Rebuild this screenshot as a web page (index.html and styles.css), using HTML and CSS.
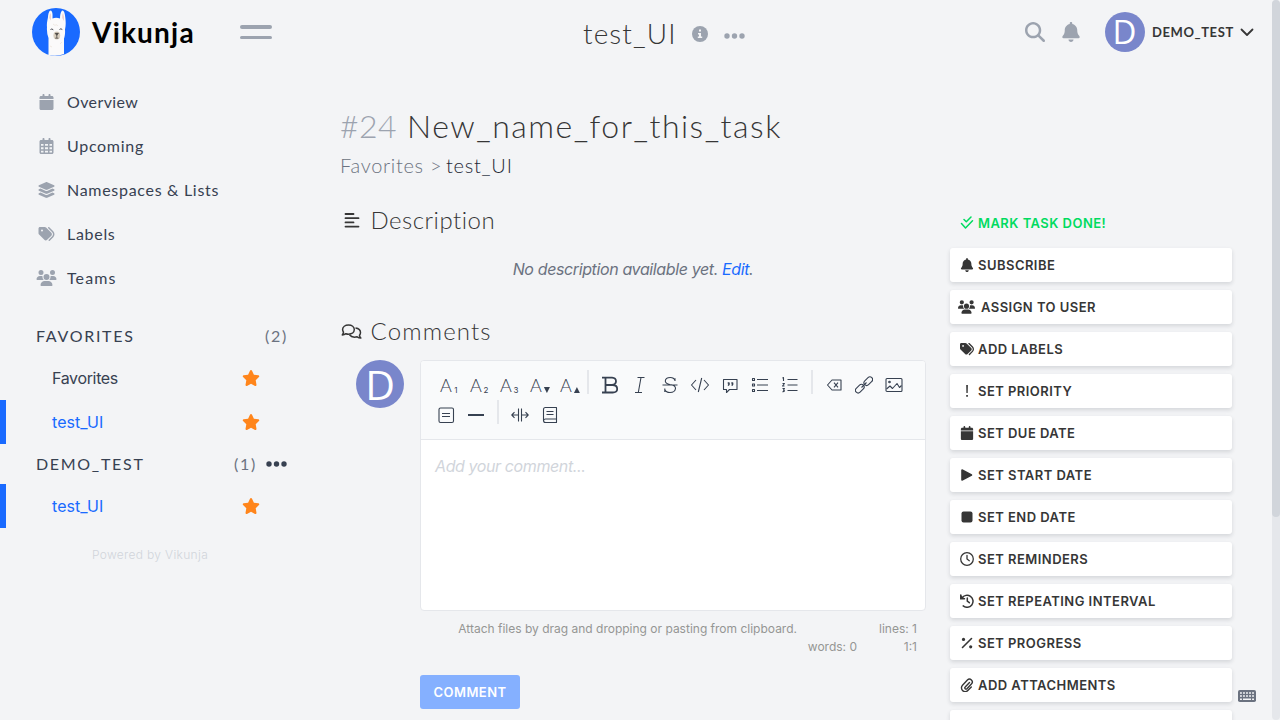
FILE: index.html
```html
<!DOCTYPE html>
<html lang="en">
<head>
<meta charset="utf-8">
<title>test_UI | Vikunja</title>
<link rel="stylesheet" href="styles.css">
</head>
<body>
<svg class="sprite" aria-hidden="true">
  <symbol id="calendar" viewBox="0 0 448 512"><path d="M96 32V64H48C21.5 64 0 85.500 0 112v48H448V112c0-26.500-21.500-48-48-48H352V32c0-17.700-14.300-32-32-32s-32 14.300-32 32V64H160V32c0-17.700-14.300-32-32-32S96 14.300 96 32zM448 192H0V464c0 26.500 21.500 48 48 48H400c26.500 0 48-21.500 48-48V192z"/></symbol>
  <symbol id="calendar-days" viewBox="0 0 448 512"><path fill-rule="evenodd" d="M96 32V64H48C21.500 64 0 85.500 0 112V464c0 26.500 21.500 48 48 48H400c26.500 0 48-21.500 48-48V112c0-26.500-21.500-48-48-48H352V32c0-17.700-14.300-32-32-32s-32 14.300-32 32V64H160V32c0-17.700-14.300-32-32-32S96 14.300 96 32zM48 192h80v56H48zM176 192h96v56h-96zM320 192h80v56h-80zM48 296h80v64H48zM176 296h96v64h-96zM320 296h80v64h-80zM48 408h80v56H64q-16 0-16-16zM176 408h96v56h-96zM320 408h80v40q0 16-16 16h-64z"/></symbol>
  <symbol id="layers" viewBox="0 0 576 512"><path d="M264.500 5.200c14.900-6.900 32.100-6.900 47 0l218.600 101c8.500 3.900 13.900 12.400 13.900 21.800s-5.400 17.900-13.900 21.800l-218.600 101c-14.900 6.900-32.100 6.900-47 0L45.900 149.800C37.400 145.800 32 137.300 32 128s5.400-17.900 13.900-21.800L264.500 5.200zM476.900 209.600l53.200 24.600c8.500 3.900 13.900 12.400 13.900 21.800s-5.400 17.900-13.900 21.800l-218.600 101c-14.900 6.900-32.100 6.900-47 0L45.900 277.800C37.400 273.800 32 265.300 32 256s5.400-17.900 13.900-21.800l53.200-24.600 152 70.200c23.400 10.800 50.400 10.800 73.800 0l152-70.200zm-152 198.200l152-70.200 53.200 24.600c8.500 3.900 13.900 12.400 13.900 21.800s-5.400 17.900-13.900 21.800l-218.600 101c-14.900 6.900-32.100 6.900-47 0L45.900 405.800C37.400 401.800 32 393.300 32 384s5.400-17.900 13.900-21.800l53.200-24.600 152 70.200c23.400 10.800 50.400 10.800 73.800 0z"/></symbol>
  <symbol id="tags" viewBox="0 0 512 512"><path d="M345 39.100L472.800 168.400c52.400 53 52.400 138.200 0 191.200L360.800 472.900c-9.300 9.400-24.500 9.500-33.900 .2s-9.500-24.500-.2-33.900L438.600 325.900c33.900-34.300 33.900-89.400 0-123.700L310.900 72.900c-9.300-9.400-9.200-24.600 .2-33.900s24.600-9.200 33.900 .2zM0 229.500V80C0 53.500 21.500 32 48 32H197.500c17 0 33.300 6.700 45.300 18.700l168 168c25 25 25 65.500 0 90.500L277.300 442.700c-25 25-65.500 25-90.500 0l-168-168C6.700 262.700 0 246.500 0 229.500zM144 144a32 32 0 1 0 -64 0 32 32 0 1 0 64 0z"/></symbol>
  <symbol id="users" viewBox="0 0 640 512"><path d="M144 0a80 80 0 1 1 0 160A80 80 0 1 1 144 0zM512 0a80 80 0 1 1 0 160A80 80 0 1 1 512 0zM0 298.700C0 239.800 47.800 192 106.700 192h42.700c15.900 0 31 3.500 44.600 9.700c-1.300 7.200-1.900 14.700-1.900 22.300c0 38.200 16.800 72.500 43.300 96H21.300C9.600 320 0 310.400 0 298.700zM405.300 320c26.600-23.500 43.300-57.800 43.300-96c0-7.600-.7-15-1.900-22.300c13.600-6.300 28.700-9.700 44.600-9.700h42.700C592.200 192 640 239.800 640 298.700c0 11.800-9.600 21.300-21.300 21.300H405.300zM224 224a96 96 0 1 1 192 0 96 96 0 1 1 -192 0zM128 485.300C128 411.700 187.700 352 261.300 352H378.700C452.300 352 512 411.700 512 485.300c0 14.700-11.900 26.700-26.700 26.700H154.700c-14.700 0-26.700-11.900-26.700-26.700z"/></symbol>
  <symbol id="star" viewBox="0 0 576 512"><path d="M316.900 18C311.600 7 300.400 0 288.100 0s-23.400 7-28.800 18L195 150.300 51.400 171.500c-12 1.800-22 10.200-25.700 21.700s-.7 24.200 7.900 32.700L137.800 329 113.200 474.700c-2 12 3 24.200 12.900 31.300s23 8 33.800 2.300l128.300-68.500 128.300 68.500c10.800 5.700 23.900 4.900 33.800-2.300s14.900-19.300 12.900-31.300L438.500 329 542.700 225.900c8.600-8.500 11.700-21.200 7.900-32.700s-13.700-19.900-25.700-21.700L381.200 150.300 316.900 18z"/></symbol>
  <symbol id="bell" viewBox="0 0 448 512"><path d="M224 0c-17.700 0-32 14.300-32 32V51.200C119 66 64 130.600 64 208v18.800c0 47-17.300 92.400-48.500 127.600l-7.400 8.300c-8.400 9.400-10.400 22.900-5.300 34.400S19.400 416 32 416H416c12.600 0 24-7.400 29.200-18.900s3.100-25-5.300-34.400l-7.400-8.300C401.300 319.200 384 273.900 384 226.800V208c0-77.400-55-142-128-156.800V32c0-17.700-14.300-32-32-32zm45.300 493.300c12-12 18.700-28.300 18.700-45.300H224 160c0 17 6.700 33.300 18.700 45.300s28.300 18.700 45.300 18.700s33.300-6.700 45.300-18.700z"/></symbol>
  <symbol id="search" viewBox="0 0 512 512"><path d="M416 208c0 45.900-14.900 88.300-40 122.700L502.600 457.400c12.500 12.500 12.500 32.800 0 45.300s-32.800 12.500-45.300 0L330.700 376c-34.400 25.200-76.800 40-122.700 40C93.100 416 0 322.900 0 208S93.100 0 208 0S416 93.100 416 208zM208 352c79.500 0 144-64.500 144-144s-64.500-144-144-144S64 128.500 64 208s64.500 144 144 144z"/></symbol>
  <symbol id="dots" viewBox="0 0 21 6"><circle cx="3" cy="3" r="2.700"/><circle cx="10.500" cy="3" r="2.700"/><circle cx="18" cy="3" r="2.700"/></symbol>
</svg>

<header class="navbar">
  <a class="logo">
    <svg class="logo-mark" viewBox="0 0 48 48">
      <circle cx="24" cy="24" r="24" fill="#196aff"/>
      <path d="M16.500 47V30q-2-5-1.500-11c-.500-3 .500-7 1-10 .300-4 1.500-7 3-6.500 2 1.500 1.500 5.500 1.500 8q3.500-1.500 7.500 0c0-3 .3-6 2-8 2-.500 3 3 3.300 7 .5 4 .7 8-.3 12 .3 4-.2 7-1 9V46q-7 3-15.500 1z" fill="#fbfafa"/>
      <path d="M17.200 10q.3-4 1.500-5 .8 3 .2 7.500zM30.200 10q-.5-3 .8-5 1.400 3 1 8z" fill="#efd2d0"/>
      <path d="M18.500 21.500q1.300-1.200 2.800.3M27.500 21.500q1.300-1.400 2.800 0" fill="none" stroke="#34373e" stroke-width=".9"/>
      <ellipse cx="24.800" cy="27.500" rx="3.400" ry="4" fill="#d9cfc0"/>
      <path d="M23.200 25.300h3.200l-1.600 2zM24.800 27v3M23.200 30.200h3.200" fill="#3c3a38" stroke="#4d4843" stroke-width=".8"/>
      <path d="M21 16q2 2 3 1t2 1M30 34l-2 2M18 38l2 1" fill="none" stroke="#eee4dc" stroke-width=".8"/>
    </svg>
    <span class="logo-name">Vikunja</span>
  </a>
  <span class="menu-toggle"><i></i><i></i></span>
  <div class="list-title">
    <h1>test_UI</h1>
    <svg class="info" viewBox="0 0 16 16"><circle cx="8" cy="8" r="8" fill="#9ca3af"/><path d="M7 3.500h2v2H7zM6 7h3v3.600h1.200v1.500H5.800v-1.500H7V8.400H6z" fill="#f3f4f6"/></svg>
    <svg class="title-dots"><use href="#dots"/></svg>
  </div>
  <div class="nav-end">
    <svg class="nav-search"><use href="#search"/></svg>
    <svg class="nav-bell"><use href="#bell"/></svg>
    <span class="avatar avatar-nav">D</span>
    <span class="username">DEMO_TEST</span>
    <svg class="chevron" viewBox="0 0 14 9"><path d="M1.500 1.500 7 7l5.500-5.500" fill="none" stroke="#363636" stroke-width="1.800" stroke-linecap="round" stroke-linejoin="round"/></svg>
  </div>
</header>

<div class="layout">
  <aside class="sidebar">
    <nav class="menu">
      <a class="menu-item snug"><svg><use href="#calendar"/></svg><span>Overview</span></a>
      <a class="menu-item"><svg><use href="#calendar-days"/></svg><span>Upcoming</span></a>
      <a class="menu-item"><svg><use href="#layers"/></svg><span>Namespaces &amp; Lists</span></a>
      <a class="menu-item"><svg><use href="#tags"/></svg><span>Labels</span></a>
      <a class="menu-item loose"><svg><use href="#users"/></svg><span>Teams</span></a>
    </nav>
    <div class="namespace"><span class="ns-name">FAVORITES</span><span class="count">(2)</span></div>
    <a class="list-item"><span>Favorites</span><svg><use href="#star"/></svg></a>
    <a class="list-item active"><span>test_UI</span><svg><use href="#star"/></svg></a>
    <div class="namespace"><span class="ns-name">DEMO_TEST</span><span class="count">(1)</span><svg class="ns-dots"><use href="#dots"/></svg></div>
    <a class="list-item active"><span>test_UI</span><svg><use href="#star"/></svg></a>
    <p class="powered">Powered by Vikunja</p>
  </aside>

  <main class="task">
    <h1 class="task-title"><span class="task-id">#24</span><span class="task-name">New_name_for_this_task</span></h1>
    <h6 class="crumbs"><span class="crumb-ns">Favorites &gt;</span><span class="crumb-list">test_UI</span></h6>
    <div class="columns">
      <div class="content">
        <h3 class="section"><svg viewBox="0 0 20 18"><path d="M5.500 3h8M5.500 7.200h13M5.500 11.400h8M5.500 15.600h13" stroke="#363636" stroke-width="1.800" stroke-linecap="round"/></svg><span>Description</span></h3>
        <p class="no-desc">No description available yet. <a>Edit</a>.</p>
        <h3 class="section comments"><svg viewBox="0 0 20 18"><g transform="translate(1.500 1)" fill="none" stroke="#363636" stroke-width="1.500" stroke-linejoin="round"><path d="M7 2c3.300 0 5.800 2 5.800 4.600S10.300 11.200 7 11.200q-1.300 0-2.600-.5Q2.800 12 .8 12q1-1.400 1.200-2.800Q1.100 8 1.100 6.600C1.100 4 3.700 2 7 2z"/><path d="M14 5c3 .4 5 2.200 5 4.600q0 1.500-1 2.700.2 1.500 1.300 2.800-2 0-3.700-1.300-1.200.4-2.600.4-3.300-.2-5-2.500"/></g></svg><span>Comments</span></h3>
        <div class="comment">
          <span class="avatar avatar-comment">D</span>
          <div class="comment-body">
            <div class="editor">
              <div class="toolbar">
                <span class="tool head">A<sub>1</sub></span><span class="tool head">A<sub>2</sub></span><span class="tool head">A<sub>3</sub></span><span class="tool head">A<i class="down"></i></span><span class="tool head">A<i class="up"></i></span><i class="sep"></i>
                <span class="tool bold"><svg viewBox="0 0 18 18"><path d="M1 1.700h10Q15 2 15 5.300T11 9H5h6.500q4.700.2 4.700 3.900T11.500 16.500H1M4.500 2v14.500" stroke-width="1.800"/></svg></span>
                <span class="tool"><svg viewBox="0 0 18 18"><path d="M6.500 1.500h7M4 16.500h7M10 1.500l-2.700 15"/></svg></span>
                <span class="tool"><svg viewBox="0 0 18 18"><path d="M14 5V2.200M14 4.500Q13 1.500 9.300 1.500 4.500 1.500 4.300 5q0 2.500 4.500 3.500 6 .8 5.700 4-.5 4-5.500 4-4 0-5.200-3M3.800 16v-3.500M1.500 9h15"/></svg></span>
                <span class="tool"><svg viewBox="0 0 18 18"><path d="M5 4 .5 9 5 14M13 4l4.500 5-4.500 5M10.700 2 7.300 16"/></svg></span>
                <span class="tool"><svg viewBox="0 0 18 18"><path d="M2.500 3.500h13.500v10H8.500L5.500 16.500v-3h-3z"/><path d="M6.700 7h1.300v1.400l-.8 1.200M10.300 7h1.300v1.400l-.8 1.200" stroke-width="1.500"/></svg></span>
                <span class="tool"><svg viewBox="0 0 18 18"><path d="M6 3.500h11M6 9h11M6 14.500h11M1.500 2.500h2v2h-2zM1.500 8h2v2h-2zM1.500 13.500h2v2h-2z"/></svg></span>
                <span class="tool"><svg viewBox="0 0 18 18"><path d="M6.500 3.500h10M6.500 9h10M6.500 14.500h10M1.500 2.300l1-.8v3.500M1.500 7.500h2L1.500 10h2M1.500 12.500h2l-1 1.500 1 1-2 1"/></svg></span>
                <i class="sep"></i>
                <span class="tool"><svg viewBox="0 0 18 18"><path d="M7 4h9v10H7L2.500 9zM9 6.700l4 4.600M13 6.700l-4 4.600"/></svg></span>
                <span class="tool"><svg viewBox="0 0 18 18"><rect x="-.2" y="10" width="10" height="5.400" rx="2.700" transform="rotate(-45 4.800 12.700)"/><rect x="8.300" y="2.500" width="10" height="5.400" rx="2.700" transform="rotate(-45 13.300 5.200)"/><path d="M6.500 11.500l5-5"/></svg></span>
                <span class="tool"><svg viewBox="0 0 18 18"><rect x="1" y="2.500" width="16" height="13" rx="1"/><path d="M1.500 13 5 10l2.500 2.500 4.500-5 2.500 4 2-2"/><circle cx="4.500" cy="6" r=".8"/></svg></span>
                <span class="tool"><svg viewBox="0 0 18 18"><rect x="2" y="2" width="14.500" height="14.500" rx="1.500"/><path d="M5 7.500h8M5 10.500h8"/></svg></span>
                <span class="tool"><svg viewBox="0 0 18 18"><path d="M1 9h16" stroke-width="2"/></svg></span>
                <i class="sep"></i>
                <span class="tool"><svg viewBox="0 0 18 18"><path d="M7.500 2.500v13M10.500 2.500v13M7 9H.8M3.500 6.200.8 9l2.700 2.800M11 9h6.200M14.500 6.200 17.200 9l-2.700 2.800"/></svg></span>
                <span class="tool"><svg viewBox="0 0 18 18"><path d="M4.500 1.500H15.500v15h-11Q2.500 16.500 2.500 14.500V3.500Q2.500 1.500 4.500 1.500zM15.500 13h-11Q3 13 2.500 14.500M5.500 5.500h7M5.500 8.500h7"/></svg></span>
              </div>
              <div class="textarea">Add your comment...</div>
            </div>
            <div class="status"><span class="attach">Attach files by drag and dropping or pasting from clipboard.</span><span>lines: 1</span><span>words: 0</span><span>1:1</span></div>
            <button class="comment-btn">COMMENT</button>
          </div>
        </div>
      </div>
      <div class="actions">
        <a class="action done"><svg viewBox="0 0 14 14"><path d="M4 3.500l2.300 2.300L11 1M1.500 7.500l4 4.500 7-7.300" fill="none" stroke="currentColor" stroke-width="1.500" stroke-linecap="round" stroke-linejoin="round"/></svg><span>MARK TASK DONE!</span></a>
        <a class="action"><svg><use href="#bell"/></svg><span>SUBSCRIBE</span></a>
        <a class="action wide"><svg><use href="#users"/></svg><span>ASSIGN TO USER</span></a>
        <a class="action"><svg><use href="#tags"/></svg><span>ADD LABELS</span></a>
        <a class="action"><svg viewBox="0 0 14 14"><path d="M6.200 1h1.700l-.2 8H6.400zM6.200 11h1.700v1.700H6.200z"/></svg><span>SET PRIORITY</span></a>
        <a class="action"><svg><use href="#calendar"/></svg><span>SET DUE DATE</span></a>
        <a class="action"><svg viewBox="0 0 14 14"><path d="M2 2v10l9.500-5z" stroke="currentColor" stroke-width="1.600" stroke-linejoin="round"/></svg><span>SET START DATE</span></a>
        <a class="action"><svg viewBox="0 0 14 14"><rect x="1.500" y="1.500" width="11" height="11" rx="2"/></svg><span>SET END DATE</span></a>
        <a class="action"><svg viewBox="0 0 14 14"><path d="M7 .700a6.300 6.300 0 1 1 0 12.600A6.300 6.300 0 1 1 7 .700M7 3.500V7l2.300 1.700" fill="none" stroke="currentColor" stroke-width="1.300" stroke-linecap="round"/></svg><span>SET REMINDERS</span></a>
        <a class="action"><svg viewBox="0 0 14 14"><path d="M2 4A6 6 0 1 1 3.200 11.900M7.300 4v3.200l2 1.500M.800 1v3.700h3.700" fill="none" stroke="currentColor" stroke-width="1.500" stroke-linecap="round"/><path d="M.500.800 4.800 5H.500z"/></svg><span>SET REPEATING INTERVAL</span></a>
        <a class="action"><svg viewBox="0 0 14 14"><path d="M2.500 11.500l9-9" stroke="currentColor" stroke-width="1.600" stroke-linecap="round"/><circle cx="3.500" cy="3.400" r="1.600"/><circle cx="10.700" cy="10.800" r="1.600"/></svg><span>SET PROGRESS</span></a>
        <a class="action"><svg viewBox="0 0 14 14"><path d="M9.500 4.500 5.200 9a1.200 1.200 0 0 0 1.700 1.700l4.500-4.700a2.800 2.800 0 0 0-4-4L2.500 7.200a3.700 3.700 0 0 0 5.300 5.200l3.500-3.500" fill="none" stroke="currentColor" stroke-width="1.400" stroke-linecap="round"/></svg><span>ADD ATTACHMENTS</span></a>
        <a class="action"></a>
      </div>
    </div>
  </main>
</div>
<svg class="keyboard" viewBox="0 0 18 12"><rect width="18" height="12" rx="1.800" fill="#6b7280"/><path d="M2 3h14M2 6h14" stroke="#f3f4f6" stroke-width="1.700" stroke-dasharray="1.900 1.120"/><path d="M2 9.300h1.900M5 9.300h8M14.100 9.300H16" stroke="#f3f4f6" stroke-width="1.600"/></svg>
<div class="scrollbar"><div class="thumb"></div></div>
</body>
</html>
```
FILE: styles.css
```css
* { box-sizing: border-box; }
body { margin: 0; width: 1280px; height: 720px; overflow: hidden; background: #f3f4f6; color: #363636; font: 16px/24px Inter, "Liberation Sans", sans-serif; white-space: nowrap; }
h1, h3, h6, p { margin: 0; font-weight: 300; }
svg { display: block; flex: none; fill: currentColor; }
.sprite { display: none; }

.navbar { display: flex; align-items: center; height: 64px; padding-left: 32px; }
.logo { display: flex; align-items: center; width: 208px; }
.logo-mark { width: 48px; height: 48px; }
.logo-name { margin-left: 12px; font: 700 28px/40px Lato, sans-serif; letter-spacing: 1.2px; color: #000; }
.menu-toggle { display: flex; flex-direction: column; justify-content: space-between; width: 32px; height: 14px; }
.menu-toggle i { height: 3.500px; border-radius: 2px; background: #9ca3af; }
.list-title { display: flex; align-items: center; width: 415px; margin-left: 311px; }
.list-title h1 { width: 109px; padding-top: 1px; font: 300 28px/40px Lato, sans-serif; letter-spacing: 1.1px; }
.info { width: 16px; height: 16px; margin-top: 4px; }
.title-dots { width: 21px; height: 6px; margin: 8px 0 0 16px; color: #9ca3af; }
.nav-end { display: flex; align-items: center; margin-left: 27px; color: #9ca3af; }
.nav-search { width: 20px; height: 20px; }
.nav-bell { width: 18px; height: 20px; margin-left: 17px; }
.avatar { display: flex; align-items: center; justify-content: center; flex: none; border-radius: 50%; background: #7986cb; color: #fff; font-family: "Open Sans", sans-serif; font-weight: 500; }
.avatar-nav { width: 40px; height: 40px; margin-left: 24.500px; font-size: 33px; }
.username { width: 88px; margin-left: 7.500px; font: 700 13px/20px Lato, sans-serif; letter-spacing: .6px; color: #363636; }
.chevron { width: 14px; height: 9px; }

.layout { display: flex; height: 656px; }
.sidebar { width: 300px; padding-top: 16px; color: #374151; }
.menu { padding-bottom: 16px; }
.menu-item { display: flex; align-items: center; height: 44px; padding-left: 36px; font: 400 16px/24px Lato, sans-serif; letter-spacing: .7px; }
.menu-item.snug { letter-spacing: .4px; }
.menu-item.loose { letter-spacing: 1.1px; }
.menu-item svg { width: 21px; height: 16px; margin-right: 10px; color: #9ca3af; }
.namespace { display: flex; align-items: center; height: 40px; padding: 0 12px 0 36px; font: 400 16px/24px Lato, sans-serif; letter-spacing: 1.7px; }
.count { margin-left: auto; color: #6b7280; }
.ns-dots { width: 21px; height: 6px; margin: 0 1px 0 9px; }
.list-item { display: flex; align-items: center; justify-content: space-between; height: 44px; padding: 0 40px 0 52px; letter-spacing: -.35px; }
.list-item svg { width: 18px; height: 16px; color: #ff851b; }
.list-item.active { padding-left: 46px; border-left: 6px solid #196aff; color: #196aff; letter-spacing: .05px; }
.powered { padding-top: 17px; text-align: center; font-size: 12px; line-height: 20px; letter-spacing: .32px; color: #d1d5db; }

.task { width: 972px; padding: 40px 40px 0; font-family: Lato, sans-serif; }
.task-title { display: flex; height: 47px; font-size: 32px; line-height: 44px; }
.task-id { width: 67px; letter-spacing: .4px; color: #9ca3af; }
.task-name { letter-spacing: 1.5px; }
.crumbs { display: flex; height: 32px; font-size: 20px; line-height: 29px; }
.crumb-ns { width: 106px; letter-spacing: .7px; color: #6b7280; }
.crumb-list { letter-spacing: .75px; color: #1f2937; }
.columns { display: flex; justify-content: space-between; padding-top: 20px; }
.content { width: 586px; }
.section { display: flex; align-items: center; height: 34px; font-size: 24px; line-height: 34px; letter-spacing: .5px; }
.section svg { width: 20px; height: 18px; margin-right: 10.500px; overflow: visible; }
.comments { letter-spacing: 1.15px; }
.no-desc { height: 77px; padding-top: 20px; text-align: center; font: italic 400 16px/24px Inter, sans-serif; letter-spacing: -.38px; color: #6b7280; }
.no-desc a { color: #196aff; }
.comment { display: flex; gap: 16px; padding: 12px 0 0 16px; font-family: Inter, sans-serif; }
.avatar-comment { width: 48px; height: 48px; font-size: 41px; }
.comment-body { width: 506px; }
.editor { height: 251px; border: 1px solid #e5e7eb; border-radius: 4px; overflow: hidden; background: #fff; }
.toolbar { display: flex; flex-wrap: wrap; align-content: flex-start; height: 79px; padding: 9px 10px; border-bottom: 1px solid #e5e7eb; background: #f9fafb; }
.tool { display: flex; align-items: center; justify-content: center; width: 30px; height: 30px; color: #374151; }
.tool svg { width: 18px; height: 18px; fill: none; stroke: #374151; stroke-width: 1.100; stroke-linejoin: round; }
.head { padding-left: 8px; font: 300 18px/30px Lato, sans-serif; }
.head sub { width: 8px; padding-top: 10px; text-align: center; font: 400 8px/10px Inter, sans-serif; }
.head i { width: 6px; height: 6px; margin: 10px 0 0 2px; background: #374151; }
.down { clip-path: polygon(0 0, 100% 0, 50% 100%); }
.up { clip-path: polygon(50% 0, 100% 100%, 0 100%); }
.sep { width: 2px; height: 24px; margin: 0 6px; background: #e5e7eb; }
.textarea { padding: 14px; font-style: italic; letter-spacing: -.4px; color: #d1d5db; }
.status { display: grid; grid-template-columns: 1fr 60px; align-content: start; height: 64px; padding: 9px 9px 0 0; text-align: right; font-size: 12px; line-height: 18px; color: #959694; }
.attach { padding-right: 60px; }
.comment-btn { display: block; width: 100px; height: 34px; padding: 0; border: 0; border-radius: 3px; background: #85b0ff; color: #fff; font: 600 13px/20px Inter, sans-serif; letter-spacing: .45px; }
.actions { width: 282px; padding-top: 3px; font-family: Inter, sans-serif; }
.action { display: flex; align-items: center; height: 34px; margin-bottom: 8px; padding-left: 10px; border-radius: 3px; background: #fff; box-shadow: 0 2px 4px #1f293726; font-size: 13px; font-weight: 600; letter-spacing: .46px; }
.action svg { width: 14px; height: 14px; margin-right: 4px; }
.action.wide svg { width: 17px; margin: 0 6px 0 -2px; }
.action.done { background: none; box-shadow: none; color: #00db60; }

.keyboard { position: absolute; left: 1238px; top: 690px; width: 18px; height: 12px; }
.scrollbar { position: absolute; right: 0; top: 0; width: 8px; height: 720px; border-radius: 4px; background: #e5e7eb; }
.thumb { height: 517px; border-radius: 4px; background: #d1d5db; }
```
